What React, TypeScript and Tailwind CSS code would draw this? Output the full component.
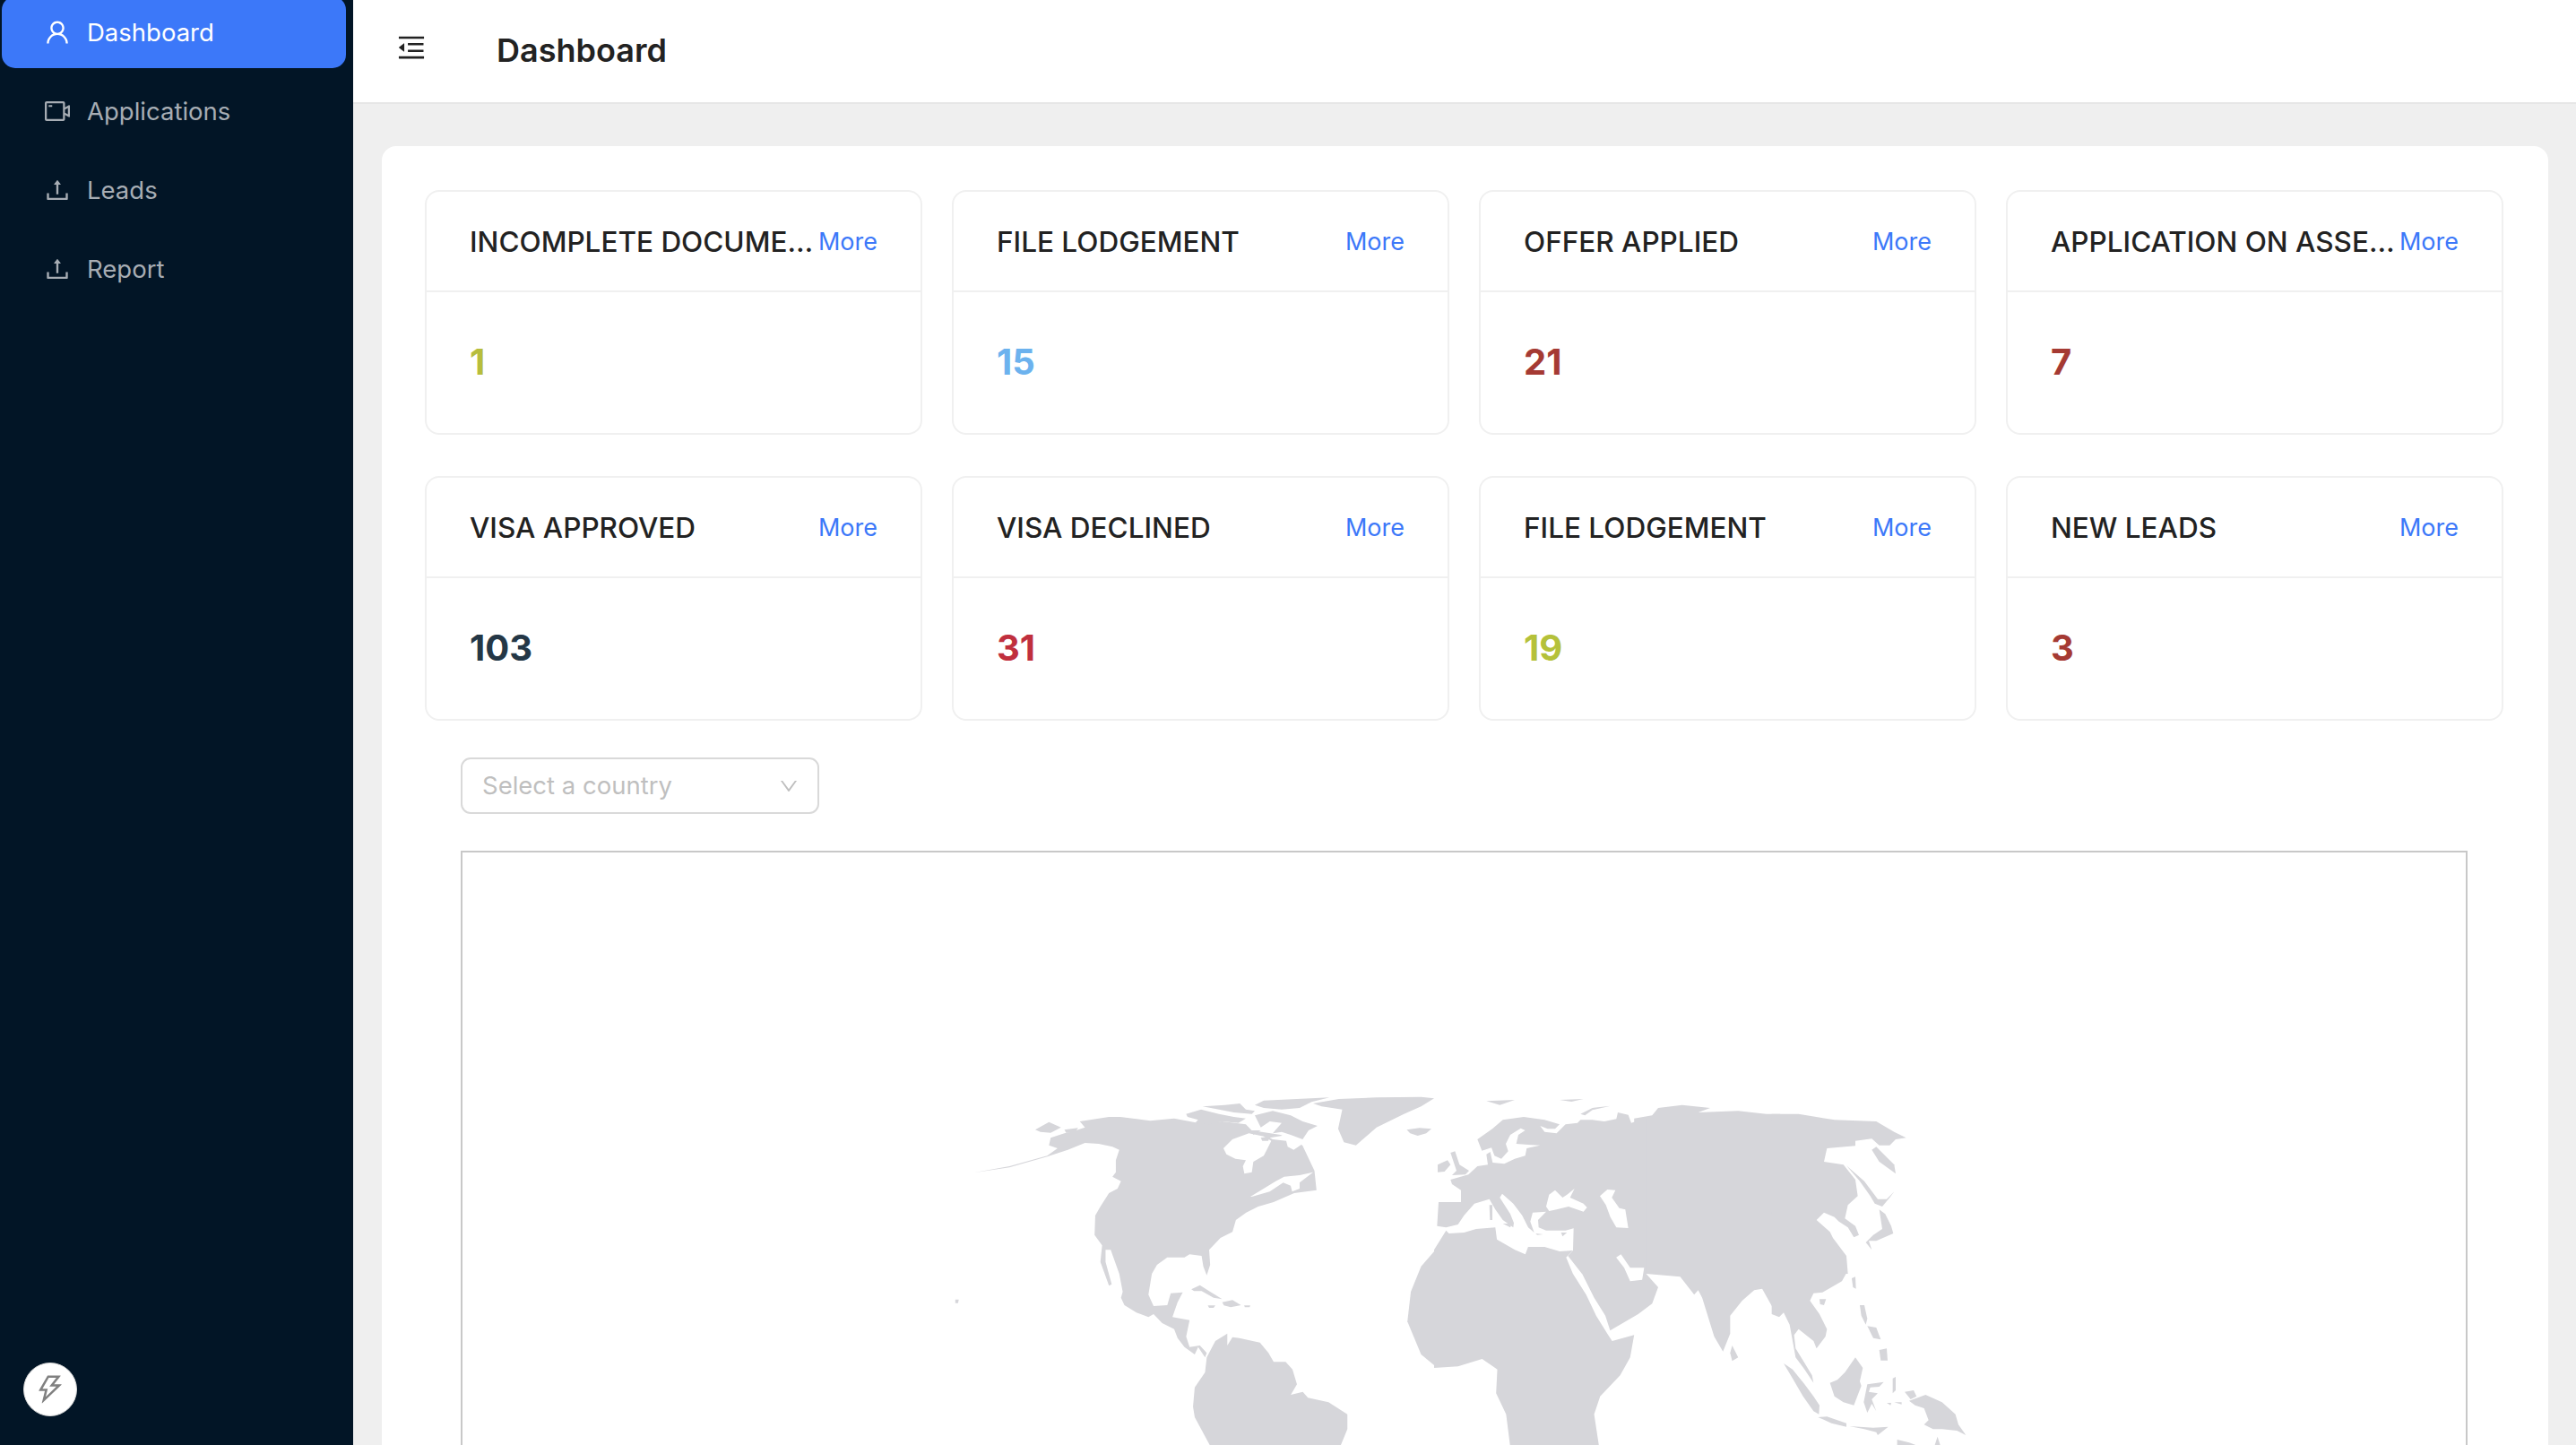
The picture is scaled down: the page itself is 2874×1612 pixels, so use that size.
import React from 'react';
import {
  AiOutlineDown,
  AiOutlineMenuFold,
  AiOutlineThunderbolt,
  AiOutlineUpload,
  AiOutlineUser,
  AiOutlineVideoCamera,
} from 'react-icons/ai';

const navItems = [
  { label: 'Dashboard', icon: AiOutlineUser, active: true },
  { label: 'Applications', icon: AiOutlineVideoCamera, active: false },
  { label: 'Leads', icon: AiOutlineUpload, active: false },
  { label: 'Report', icon: AiOutlineUpload, active: false },
];

const stats = [
  { title: 'INCOMPLETE DOCUMENTS', value: '1', color: 'text-[#b7bd3c]' },
  { title: 'FILE LODGEMENT', value: '15', color: 'text-[#6cb2ee]' },
  { title: 'OFFER APPLIED', value: '21', color: 'text-[#a53a33]' },
  { title: 'APPLICATION ON ASSESSMENT', value: '7', color: 'text-[#a53a33]' },
  { title: 'VISA APPROVED', value: '103', color: 'text-[#243746]' },
  { title: 'VISA DECLINED', value: '31', color: 'text-[#c02f3e]' },
  { title: 'FILE LODGEMENT', value: '19', color: 'text-[#b5c13a]' },
  { title: 'NEW LEADS', value: '3', color: 'text-[#a53a33]' },
];

// The map is traced in pieces, each list keeps the coordinates of the crop it was traced from
const americas = [
  'M225 382L330 360 440 325 470 300 445 290 450 265 490 250 510 245 550 230 535 210 620 195 653 195 740 208 810 200 880 215 950 210 1019 220 1036 240 1120 255 1150 270 1184 290 1219 375 1225 440 1160 450 1100 480 1055 495 1020 515 990 540 980 580 945 600 912 640 915 690 905 725 895 695 890 660 855 655 840 665 790 665 760 690 745 720 735 790 750 828 790 825 800 785 835 782 820 815 805 865 855 875 845 930 855 965 885 960 905 985 900 1000 880 965 870 990 840 965 820 935 810 905 775 885 750 855 735 865 700 850 665 825 655 800 660 780 650 720 625 640 610 640 610 680 628 755 620 760 595 680 600 625 578 590 580 525 595 495 620 450 645 435 655 410 630 395 640 380 640 340 650 305 630 295 590 285 550 282 500 305 440 328 330 364Z',
  'M405 238L445 212 480 230 450 248 420 245Z',
  'M490 238L530 232 520 248 495 248Z',
  'M1215 150L1290 135 1400 130 1530 128 1568 133 1530 160 1480 185 1400 230 1340 290 1305 280 1288 235 1300 170 1240 160Z',
  'M1488 238L1525 232 1560 235 1545 250 1520 258 1498 250Z',
  'M860 772L885 758 915 780 950 805 925 800 890 778 868 778Z',
  'M950 815L980 808 1005 825 975 832 955 826Z',
  'M908 826L930 826 925 834 912 834Z',
  'M1014 826L1032 826 1030 832 1016 832Z',
  'M172 806L182 806 180 818 172 818Z',
  'M905 1000L930 945 965 920 965 960 980 932 1000 935 1060 950 1085 985 1100 1015 1135 1015 1155 1040 1168 1090 1150 1125 1185 1115 1200 1135 1260 1150 1315 1190 1315 1240 1295 1296 915 1296 870 1200 865 1165 870 1100 900 1050Z',
  'M1572 640L1530 695 1500 780 1490 880 1530 990 1572 1030Z',
];

const canadaWater = [
  'M345 210L375 180 430 160 480 170 505 185 490 215 480 235 445 255 440 290 415 295 410 270 420 250 385 245 355 230Z',
  'M500 175L560 165 610 195 580 215 560 205 555 185 510 180Z',
  'M435 372L520 320 548 305 600 300 645 290 600 325 600 345 575 355 570 335 545 325 500 355 440 372Z',
];

const canadaIslands = [
  'M220 95L270 80 330 95 380 105 420 110 395 125 340 120 300 130 250 125 260 115 225 105Z',
  'M275 70L350 65 400 60 420 80 450 85 440 95 380 90 330 80Z',
  'M480 50L700 40 640 55 600 75 540 80 480 75 450 65Z',
  'M450 100L510 85 570 100 610 120 660 135 630 150 610 180 570 165 540 155 510 160 540 125 500 120 470 140 460 120Z',
  'M440 150L470 150 445 165Z',
  'M470 175L500 170 495 185 475 185Z',
];

const asiaAfrica = [
  'M500 200L545 190 560 165 620 155 690 165 660 180 760 175 830 185 865 185 865 830 845 830 820 770 800 775 770 810 740 860 740 920 722 980 700 930 670 800 660 775 650 790 615 730 530 720 560 765 545 820 510 855 440 910 428 860 400 800 370 720 365 640 500 640Z',
  'M0 640L30 575 37 585 75 582 105 570 153 565 157 605 202 640 228 655 235 630 276 630 314 645 347 642 330 665 347 720 380 790 405 860 435 925 445 945 500 925 490 1000 465 1060 415 1130 400 1190 412 1296 190 1296 180 1190 155 1120 158 1040 120 1005 60 1030 0 1035Z',
  'M745 960L760 1000 745 1012 740 985Z',
];

const gulfWater = ['M455 665L467 655 490 700 525 700 520 740 490 745 475 700Z'];

const europe = [
  'M45 360L120 360 120 320 90 300 85 285 145 268 175 240 210 235 205 200 218 192 226 228 265 232 300 215 335 205 340 180 385 170 345 168 305 165 312 135 335 120 320 113 285 135 270 165 278 190 255 215 232 205 222 178 190 188 175 150 225 115 260 85 330 75 400 85 450 100 435 115 410 115 385 105 400 125 440 130 470 100 510 95 520 85 560 85 600 90 640 82 645 60 680 68 690 95 720 85 740 80 740 600 525 600 478 540 495 522 497 448 470 455 440 455 405 455 380 445 378 420 405 392 360 395 352 425 365 462 345 445 325 405 295 365 258 332 250 345 285 400 297 430 295 445 260 420 235 385 215 350 165 365 130 405 110 435 70 445 40 440Z',
];

const europeWater = [
  'M405 375L415 335 435 320 460 345 475 335 500 315 485 345 530 365 542 378 530 392 480 375 440 385 415 390Z',
  'M585 340L610 318 637 320 625 345 650 380 670 385 680 447 640 445 620 410 605 370Z',
];

const europeIslands = [
  'M85 195L100 190 115 235 147 255 135 268 90 270 105 255 95 225Z',
  'M42 235L75 220 85 235 65 258 42 260Z',
  'M205 22L300 18 250 35Z',
  'M450 18L530 15 490 24Z',
  'M520 65L560 45 620 38 560 52 535 70Z',
  'M215 370L225 370 225 420 217 420Z',
  'M260 432L290 432 285 445Z',
  'M370 465L395 468 375 470Z',
  'M455 462L475 462 460 475Z',
];

const eastAsia = [
  'M-10 65L80 65 200 85 340 90 400 125 440 145 405 150 385 170 350 170 325 148 270 155 270 172 175 180 165 225 230 235 270 285 278 340 245 370 235 415 270 440 282 470 265 478 245 445 215 425 200 410 165 395 140 420 185 460 195 480 240 540 245 600 -10 600Z',
  'M340 175L360 195 400 235 405 265 350 225 325 185Z',
  'M240 238L300 290 345 350 375 350 400 325 385 345 360 375 335 365 320 340 285 290Z',
  'M350 385L370 400 390 440 397 465 340 490 315 490 325 520 305 495 330 470 360 450Z',
];

const southEastAsia = [
  'M-10 -2L240 -2 225 25 190 45 160 62 130 65 118 90 150 135 175 185 170 210 140 250 130 225 80 185 65 205 70 250 95 290 125 340 130 365 100 320 70 280 60 225 50 170 30 130 15 145 -10 135Z',
  'M150 85L172 85 165 105 152 102Z',
  'M258 15L270 10 272 50 262 45Z',
  'M285 105L300 105 310 150 305 170 290 140Z',
  'M310 175L340 180 355 220 330 215Z',
  'M350 255L375 250 378 290 355 290Z',
  'M270 280L295 315 285 360 290 375 265 440 230 430 200 410 185 365 210 355 235 330Z',
  'M30 300L60 320 100 370 130 410 150 440 148 470 130 460 95 410 60 350Z',
  'M145 480L175 478 240 500 240 512 190 500Z',
  'M250 510L330 515 380 512 345 540 340 530 300 520Z',
  'M310 370L365 362 350 378 320 380 315 395 345 400 325 420 340 460 325 435 310 465 298 430Z',
  'M435 395L465 390 475 410 455 420Z',
  'M450 425L505 405 560 430 605 470 615 505 640 540 610 525 560 520 530 520 500 505 515 490 500 450 470 440Z',
  'M410 555L450 565 480 576 410 576Z',
  'M535 576L545 545 555 576Z',
  'M375 432L390 432 388 440Z',
  'M400 430L425 430 425 437Z',
  'M395 350L405 345 405 390 395 400Z',
];

const App: React.FC = () => {
  return (
    <div className="flex h-screen overflow-hidden bg-[#efefef] font-['Inter',sans-serif] text-[#222222]">
      <aside className="flex w-[394px] shrink-0 flex-col bg-[#021526]">
        <nav className="-mt-[4px] flex flex-col gap-[8px] pl-[2px] pr-[8px]">
          {navItems.map(item => (
            <div
              key={item.label}
              className={`flex h-[80px] items-center gap-[17px] rounded-[15px] pl-[46px] text-[27.5px] ${item.active ? 'bg-[#3c78f9] text-white' : 'text-[#a7adb4]'}`}
            >
              <item.icon className="h-[32px] w-[32px] shrink-0" />
              <span className="mt-px">{item.label}</span>
            </div>
          ))}
        </nav>
        <button className="mb-[32px] ml-[26px] mt-auto flex h-[60px] w-[60px] items-center justify-center rounded-full border border-[#d9d9d9] bg-white text-[#808080]">
          <AiOutlineThunderbolt className="h-[38px] w-[38px]" />
        </button>
      </aside>

      <div className="flex min-w-0 flex-1 flex-col">
        <header className="flex h-[116px] shrink-0 items-center border-b-2 border-[#e6e6e6] bg-white pl-[47px]">
          <AiOutlineMenuFold className="mb-[8px] h-[36px] w-[36px] shrink-0" />
          <h1 className="mb-[3px] ml-[77px] text-[36px] font-semibold">Dashboard</h1>
        </header>

        <main className="flex-1 pl-[32px] pr-[31px] pt-[47px]">
          <div className="rounded-t-[16px] bg-white pl-[48px] pr-[50px] pt-[49px]">
            <div className="grid grid-cols-4 gap-x-[33px] gap-y-[46px]">
              {stats.map((stat, i) => (
                <div key={i} className="h-[273px] rounded-[16px] border-2 border-[#f0f0f0]">
                  <div className="flex h-[112px] items-center gap-[4px] border-b-2 border-[#f0f0f0] pl-[48px] pr-[48px] pt-[2px]">
                    <span className="min-w-0 flex-1 truncate text-[31.5px] font-medium">{stat.title}</span>
                    <a className="shrink-0 text-[27px] text-[#3c78f9]">More</a>
                  </div>
                  <div className={`flex h-[156px] items-center px-[48px] text-[40px] font-bold ${stat.color}`}>
                    {stat.value}
                  </div>
                </div>
              ))}
            </div>

            <div className="ml-[40px] mr-[40px] mt-[41px]">
              <div className="flex h-[63px] w-[400px] items-center justify-between rounded-[11px] border-2 border-[#d9d9d9] pl-[22px] pr-[20px] text-[27.5px] text-[#bfbfbf]">
                <span>Select a country</span>
                <AiOutlineDown className="h-[24px] w-[24px]" />
              </div>

              <div className="mt-[41px] h-[900px] border-2 border-[#c8c8c8]">
                <svg width="2235" height="896" viewBox="516 950 2235 896" className="block">
                  <g fill="#d6d6da" transform="translate(1000 1180) scale(0.3827 0.3333)">
                    {americas.map((d, i) => <path key={i} d={d} />)}
                  </g>
                  <g fill="#ffffff" transform="translate(1250 1210) scale(0.3333)">
                    {canadaWater.map((d, i) => <path key={i} d={d} />)}
                  </g>
                  <g fill="#d6d6da" transform="translate(1250 1210) scale(0.3333)">
                    {canadaIslands.map((d, i) => <path key={i} d={d} />)}
                  </g>
                  <g fill="#d6d6da" transform="translate(1600 1180) scale(0.4464 0.3333)">
                    {asiaAfrica.map((d, i) => <path key={i} d={d} />)}
                  </g>
                  <g fill="#d6d6da" transform="translate(1590 1220) scale(0.3333)">
                    {europe.map((d, i) => <path key={i} d={d} />)}
                  </g>
                  <g fill="#ffffff" transform="translate(1600 1180) scale(0.4464 0.3333)">
                    {gulfWater.map((d, i) => <path key={i} d={d} />)}
                  </g>
                  <g fill="#ffffff" transform="translate(1590 1220) scale(0.3333)">
                    {europeWater.map((d, i) => <path key={i} d={d} />)}
                  </g>
                  <g fill="#d6d6da" transform="translate(1590 1220) scale(0.3333)">
                    {europeIslands.map((d, i) => <path key={i} d={d} />)}
                  </g>
                  <g fill="#d6d6da" transform="translate(1980 1220) scale(0.3333)">
                    {eastAsia.map((d, i) => <path key={i} d={d} />)}
                  </g>
                  <g fill="#d6d6da" transform="translate(1980 1420) scale(0.3333)">
                    {southEastAsia.map((d, i) => <path key={i} d={d} />)}
                  </g>
                </svg>
              </div>
            </div>
          </div>
        </main>
      </div>
    </div>
  );
};

export default App;
